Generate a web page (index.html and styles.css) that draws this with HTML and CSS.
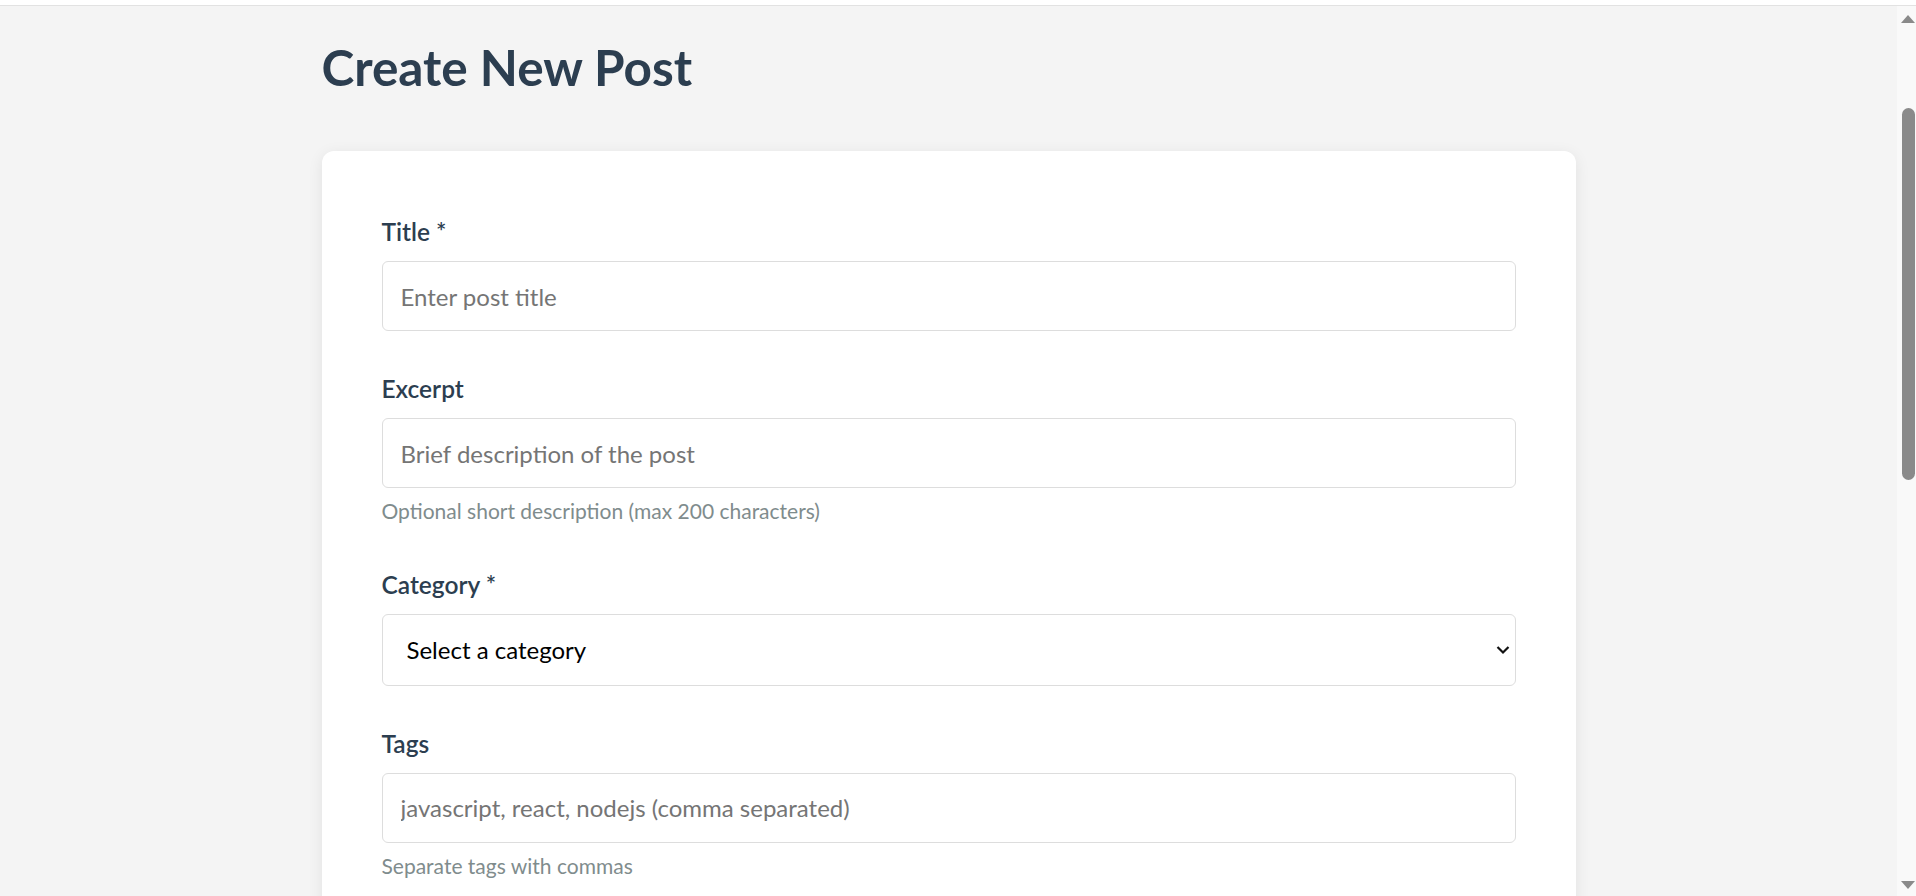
FILE: index.html
```html
<!DOCTYPE html>
<html lang="en">
<head>
<meta charset="utf-8">
<title>Create New Post</title>
<link rel="stylesheet" href="styles.css">
</head>
<body>
<div class="window-edge"></div>
<div class="app">
  <main class="viewport">
    <div class="container">
      <h1 class="page-title">Create New Post</h1>
      <form class="card post-form">
        <div class="form-group">
          <label class="form-label" for="title">Title *</label>
          <input class="form-input" id="title" type="text" placeholder="Enter post title">
        </div>
        <div class="form-group">
          <label class="form-label" for="excerpt">Excerpt</label>
          <input class="form-input" id="excerpt" type="text" placeholder="Brief description of the post">
          <small class="form-help">Optional short description (max 200 characters)</small>
        </div>
        <div class="form-group">
          <label class="form-label" for="category">Category *</label>
          <div class="select-wrap">
            <select class="form-input form-select" id="category">
              <option>Select a category</option>
              <option>Technology</option>
              <option>Programming</option>
              <option>Design</option>
            </select>
            <svg class="select-chevron" width="14" height="9" viewBox="0 0 14 9" aria-hidden="true">
              <path d="M1.5 1.5 L7 7 L12.5 1.5" fill="none" stroke="#111" stroke-width="2.2"/>
            </svg>
          </div>
        </div>
        <div class="form-group">
          <label class="form-label" for="tags">Tags</label>
          <input class="form-input" id="tags" type="text" placeholder="javascript, react, nodejs (comma separated)">
          <small class="form-help">Separate tags with commas</small>
        </div>
      </form>
    </div>
  </main>
  <div class="scrollbar" aria-hidden="true">
    <div class="sb-arrow sb-up"></div>
    <div class="sb-track"><div class="sb-thumb"></div></div>
    <div class="sb-arrow sb-down"></div>
  </div>
</div>
</body>
</html>
```

FILE: styles.css
```css
* {
  box-sizing: border-box;
}

html,
body {
  margin: 0;
  height: 100%;
}

body {
  display: flex;
  flex-direction: column;
  overflow: hidden;
  background: #f4f4f4;
  font-family: Lato, "Noto Sans", sans-serif;
  color: #2c3e50;
}

.window-edge {
  flex: none;
  height: 6px;
  background: #ffffff;
  border-bottom: 1px solid #e2e2e2;
}

.app {
  flex: 1;
  min-height: 0;
  display: flex;
}

.viewport {
  flex: 1;
  min-width: 0;
  overflow: hidden;
  padding-top: 32px;
}

/* scrollbar column */
.scrollbar {
  flex: none;
  width: 19px;
  display: flex;
  flex-direction: column;
  padding: 9px 1px 7px 4px;
  background: #f9f9f9;
}

.sb-arrow {
  flex: none;
  width: 0;
  height: 0;
  border-left: 7px solid transparent;
  border-right: 7px solid transparent;
}

.sb-up {
  border-bottom: 8px solid #8a8a8a;
}

.sb-down {
  border-top: 8px solid #8a8a8a;
}

.sb-track {
  flex: 1;
  padding-top: 85px;
}

.sb-thumb {
  width: 13px;
  height: 372px;
  margin-left: 1px;
  border-radius: 7px;
  background: #8a8a8a;
}

.container {
  width: 1254px;
  margin: 0 auto;
}

.page-title {
  margin: 0 0 55px;
  font-size: 49.5px;
  line-height: 58px;
  font-weight: 700;
  color: #2c3e50;
}

.card {
  background: #ffffff;
  border-radius: 12px;
  box-shadow: 0 3px 15px rgba(0, 0, 0, 0.08);
  padding: 60px;
}

.form-group {
  margin-bottom: 37px;
}

.form-label {
  display: block;
  padding-top: 3px;
  margin-bottom: 11px;
  font-size: 24.5px;
  line-height: 36px;
  font-weight: 600;
  color: #2c3e50;
}

.form-input {
  display: block;
  width: 100%;
  height: 70px;
  padding: 0 18px;
  border: 1px solid #dddddd;
  border-radius: 6px;
  background: #ffffff;
  font-family: inherit;
  font-size: 24px;
  color: #333333;
  outline: none;
}

.form-input::placeholder {
  color: #757575;
}

.select-wrap {
  position: relative;
}

.form-select {
  appearance: none;
  -webkit-appearance: none;
  height: 72px;
  padding: 0 60px 0 24px;
  color: #000000;
}

.select-chevron {
  position: absolute;
  right: 6px;
  top: 50%;
  transform: translateY(-50%);
  pointer-events: none;
}

.form-help {
  display: block;
  margin-top: 7px;
  font-size: 21px;
  line-height: 1.5;
  color: #7f8c8d;
}
```
